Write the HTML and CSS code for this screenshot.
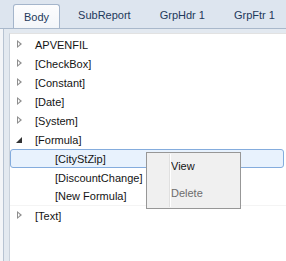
FILE: index.html
```html
<!DOCTYPE html>
<html>
<head>
<meta charset="utf-8">
<link rel="stylesheet" href="styles.css">
</head>
<body>
<div class="tabctl">
  <div class="tabs">
    <div class="tab active">Body</div>
    <div class="tab">SubReport</div>
    <div class="tab">GrpHdr 1</div>
    <div class="tab">GrpFtr 1</div>
  </div>
  <div class="pane">
    <div class="tree">
      <div class="row"><span class="exp closed"></span><span class="lbl">APVENFIL</span></div>
      <div class="row"><span class="exp closed"></span><span class="lbl">[CheckBox]</span></div>
      <div class="row"><span class="exp closed"></span><span class="lbl">[Constant]</span></div>
      <div class="row"><span class="exp closed"></span><span class="lbl">[Date]</span></div>
      <div class="row"><span class="exp closed"></span><span class="lbl">[System]</span></div>
      <div class="row"><span class="exp open"></span><span class="lbl">[Formula]</span></div>
      <div class="row child selected"><span class="lbl">[CityStZip]</span></div>
      <div class="row child"><span class="lbl">[DiscountChange]</span></div>
      <div class="row child faint"><span class="lbl">[New Formula]</span></div>
      <div class="row"><span class="exp closed"></span><span class="lbl">[Text]</span></div>
    </div>
  </div>
</div>
<div class="menu">
  <div class="mitem">View</div>
  <div class="mitem disabled">Delete</div>
</div>
</body>
</html>
```
FILE: styles.css
```css
html, body {
  margin: 0;
  padding: 0;
}
body {
  width: 286px;
  height: 261px;
  overflow: hidden;
  background: #f3f5f8;
  font-family: "Liberation Sans", Arial, sans-serif;
  font-size: 11px;
  position: relative;
}
.tabctl {
  height: 261px;
  display: flex;
  flex-direction: column;
  padding-left: 3px;
  box-sizing: border-box;
}
.tabs {
  height: 28px;
  display: flex;
  align-items: flex-end;
  gap: 7px;
  background: #dde5ef;
  margin-left: -3px;
  padding-left: 13px;
  border-bottom: 1px solid #a9b8cb;
  overflow: hidden;
}
.tab {
  flex-shrink: 0;
  white-space: nowrap;
  height: 24px;
  line-height: 22px;
  padding: 0 11px;
  color: #1e395b;
  box-sizing: border-box;
}
.tab.active {
  border: 1px solid #a4b5cb;
  border-bottom: none;
  border-radius: 3px 3px 0 0;
  background: linear-gradient(#fdfdfe, #f2f5f9);
  height: 25px;
  margin-bottom: -1px;
  padding: 0 10px;
  line-height: 24px;
}
.pane {
  flex: 1;
  border-left: 1px solid #b7c3d2;
  background: #e3e9f0;
  padding-left: 5px;
  padding-top: 4px;
  display: flex;
  flex-direction: column;
}
.tree {
  flex: 1;
  background: #ffffff;
  border-left: 1px solid #c9d1db;
  border-top: 1px solid #e2e2e2;
  padding-top: 1px;
  box-sizing: border-box;
}
.row {
  height: 19px;
  display: flex;
  align-items: center;
  position: relative;
  color: #141414;
  box-sizing: border-box;
}
.exp {
  flex-shrink: 0;
  width: 5px;
  height: 9px;
  margin-left: 7px;
  margin-right: 13px;
  position: relative;
}
.exp.closed::before {
  content: "";
  position: absolute;
  left: 0;
  top: 0;
  border-style: solid;
  border-width: 4.5px 0 4.5px 5px;
  border-color: transparent transparent transparent #8e8e8e;
}
.exp.closed::after {
  content: "";
  position: absolute;
  left: 1px;
  top: 2px;
  border-style: solid;
  border-width: 2.5px 0 2.5px 2.8px;
  border-color: transparent transparent transparent #ffffff;
}
.exp.open::before {
  content: "";
  position: absolute;
  left: -1px;
  top: 2px;
  border-style: solid;
  border-width: 0 0 6px 6px;
  border-color: transparent transparent #333333 transparent;
}
.row.child .lbl {
  margin-left: 45px;
}
.row.selected {
  background: #e8f2fd;
  border: 1px solid #84acdd;
  border-radius: 3px;
  margin-right: 2px;
}
.row.selected .lbl {
  margin-left: 44px;
}
.row.faint {
  border-bottom: 1px solid #f4f4f4;
}
.menu {
  position: absolute;
  left: 146px;
  top: 152px;
  width: 95px;
  height: 57px;
  box-sizing: border-box;
  border: 1px solid #979797;
  background: #f0f0f0;
  padding-left: 24px;
}
.menu::before {
  content: "";
  position: absolute;
  left: 22px;
  top: 1px;
  bottom: 1px;
  width: 1px;
  background: #e0e0e0;
  border-right: 1px solid #ffffff;
}
.mitem {
  height: 27px;
  line-height: 27px;
  color: #141414;
}
.mitem.disabled {
  color: #6d6d6d;
}
```
